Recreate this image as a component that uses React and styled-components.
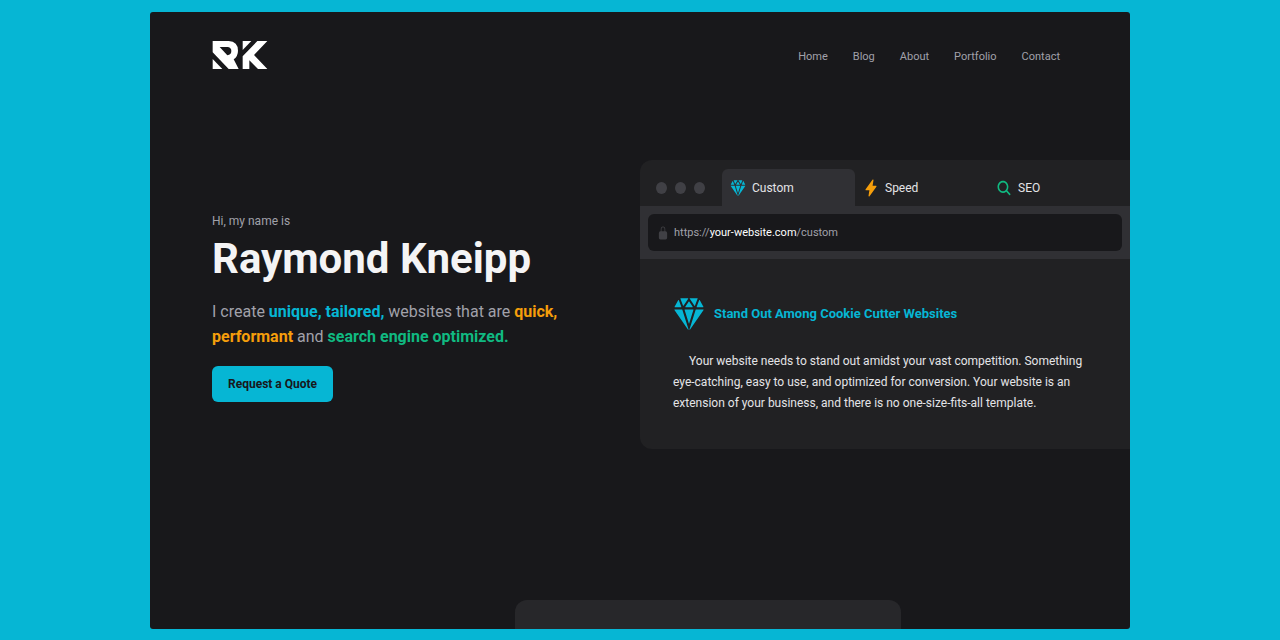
import React from 'react';
import styled, { createGlobalStyle } from 'styled-components';
import { IoDiamond, IoFlash, IoSearch, IoLockClosed } from 'react-icons/io5';

const GlobalStyle = createGlobalStyle`
  *, *::before, *::after { box-sizing: border-box; }
  body { margin: 0; background: #06b6d4; font-family: Roboto, sans-serif; color: #e4e4e7; }
  h1, h2, p { margin: 0; }
  button, input { font-family: inherit; }
`;

const Page = styled.div`
  min-height: 100vh;
  padding: 12px 150px 11px;
  display: flex;
`;

const Frame = styled.main`
  flex: 1;
  min-width: 0;
  display: flex;
  flex-direction: column;
  background: #18181b;
  border-radius: 3px;
  overflow: hidden;
`;

const Header = styled.header`
  display: flex;
  align-items: center;
  justify-content: space-between;
  padding: 29px 70px 0 62px;
`;

const LogoLink = styled.a`
  display: flex;
  color: #fff;
`;

const Nav = styled.nav`
  display: flex;
  gap: 25px;
  padding-top: 4px;
`;

const NavLink = styled.a`
  color: #a1a1aa;
  font-size: 11px;
  line-height: 20px;
  text-decoration: none;
`;

const Hero = styled.section`
  display: grid;
  grid-template-columns: 1fr 1fr;
  align-items: center;
  padding-top: 91px;
`;

const Intro = styled.div`
  display: flex;
  flex-direction: column;
  align-items: flex-start;
  padding: 4px 0 0 62px;
`;

const Greeting = styled.p`
  color: #a1a1aa;
  font-size: 12px;
  line-height: 20px;
`;

const Name = styled.h1`
  color: #f4f4f5;
  font-size: 42px;
  line-height: 56px;
  font-weight: 700;
  white-space: nowrap;
`;

const Pitch = styled.p`
  margin-top: 12px;
  max-width: 360px;
  color: #a1a1aa;
  font-size: 16px;
  line-height: 25px;
`;

const Accent = styled.strong`
  color: ${(p) => p.$color};
  font-weight: 700;
`;

const QuoteButton = styled.button`
  margin-top: 17px;
  height: 36px;
  padding: 0 16px;
  border: 0;
  border-radius: 6px;
  background: #06b6d4;
  color: #18181b;
  font-size: 12px;
  font-weight: 700;
`;

const Browser = styled.section`
  background: #212123;
  border-radius: 12px 0 0 12px;
  overflow: hidden;
`;

const TabBar = styled.div`
  display: flex;
  padding: 9px 8px 0 16px;
`;

const WindowDots = styled.div`
  display: flex;
  align-items: center;
  gap: 8px;
  margin-right: 17px;
`;

const Dot = styled.span`
  width: 11px;
  height: 12px;
  border-radius: 50%;
  background: #404045;
`;

const Tab = styled.button`
  flex: 0 0 133px;
  height: 37px;
  padding: 0 8px;
  display: flex;
  align-items: center;
  gap: 6px;
  border: 0;
  border-radius: 6px 6px 0 0;
  background: ${(p) => (p.$active ? '#303034' : 'transparent')};
  color: #e4e4e7;
  font-size: 12px;

  svg { color: ${(p) => p.$color}; width: 16px; height: 18px; }
`;

const Toolbar = styled.div`
  padding: 8px;
  background: #303034;
`;

const AddressBar = styled.div`
  height: 37px;
  padding: 0 9px;
  display: flex;
  align-items: center;
  gap: 5px;
  border-radius: 6px;
  background: #18181b;
  color: #a1a1aa;
  font-size: 11px;

  svg { color: #404045; width: 12px; height: 14px; }
  b { color: #fff; font-weight: 400; }
`;

const Article = styled.article`
  padding: 37px 32px 35px 33px;
`;

const ArticleTitle = styled.h2`
  display: flex;
  align-items: center;
  gap: 9px;
  color: #06b6d4;
  font-size: 13px;
  line-height: 20px;
  font-weight: 700;

  svg { width: 32px; height: 36px; }
`;

const ArticleText = styled.p`
  margin-top: 19px;
  text-indent: 16px;
  font-size: 12px;
  line-height: 21px;
`;

const NextCard = styled.section`
  flex: 1;
  min-height: 29px;
  width: 386px;
  margin: 151px 0 0 365px;
  background: #27272a;
  border-radius: 12px 12px 0 0;
`;

const cyan = '#06b6d4';
const amber = '#f59e0b';
const green = '#10b981';

const Logo = () => (
  <svg width="56" height="28" viewBox="0 0 168 84" fill="currentColor" aria-hidden="true">
    <path fillRule="evenodd" d="M2 0H50Q78 2 78 29Q78 46 65 55L80 84H50L2 34ZM23 18L46 43Q58 41 58 30Q58 19 46 18Z" />
    <path d="M2 54L31 84H2Z" />
    <path d="M92 0H118L92 27Z" />
    <path d="M136 0H166L126 42L166 84H138L112 58V84H92V46Z" />
  </svg>
);

const pages = ['Home', 'Blog', 'About', 'Portfolio', 'Contact'];

const tabs = [
  { label: 'Custom', color: cyan, Icon: IoDiamond, active: true },
  { label: 'Speed', color: amber, Icon: IoFlash },
  { label: 'SEO', color: green, Icon: IoSearch },
];

export default function App() {
  return (
    <>
      <GlobalStyle />
      <Page>
        <Frame>
          <Header>
            <LogoLink href="#home" aria-label="RK"><Logo /></LogoLink>
            <Nav>
              {pages.map((name) => (
                <NavLink key={name} href={`#${name.toLowerCase()}`}>{name}</NavLink>
              ))}
            </Nav>
          </Header>
          <Hero>
            <Intro>
              <Greeting>Hi, my name is</Greeting>
              <Name>Raymond Kneipp</Name>
              <Pitch>
                I create <Accent $color={cyan}>unique, tailored,</Accent> websites that are{' '}
                <Accent $color={amber}>quick, performant</Accent> and{' '}
                <Accent $color={green}>search engine optimized.</Accent>
              </Pitch>
              <QuoteButton type="button">Request a Quote</QuoteButton>
            </Intro>
            <Browser>
              <TabBar>
                <WindowDots><Dot /><Dot /><Dot /></WindowDots>
                {tabs.map(({ label, color, Icon, active }) => (
                  <Tab key={label} type="button" $active={active} $color={color}>
                    <Icon preserveAspectRatio="none" />{label}
                  </Tab>
                ))}
              </TabBar>
              <Toolbar>
                <AddressBar>
                  <IoLockClosed preserveAspectRatio="none" />
                  <span>https://<b>your-website.com</b>/custom</span>
                </AddressBar>
              </Toolbar>
              <Article>
                <ArticleTitle>
                  <IoDiamond preserveAspectRatio="none" />
                  Stand Out Among Cookie Cutter Websites
                </ArticleTitle>
                <ArticleText>
                  Your website needs to stand out amidst your vast competition. Something
                  eye-catching, easy to use, and optimized for conversion. Your website is an
                  extension of your business, and there is no one-size-fits-all template.
                </ArticleText>
              </Article>
            </Browser>
          </Hero>
          <NextCard />
        </Frame>
      </Page>
    </>
  );
}
